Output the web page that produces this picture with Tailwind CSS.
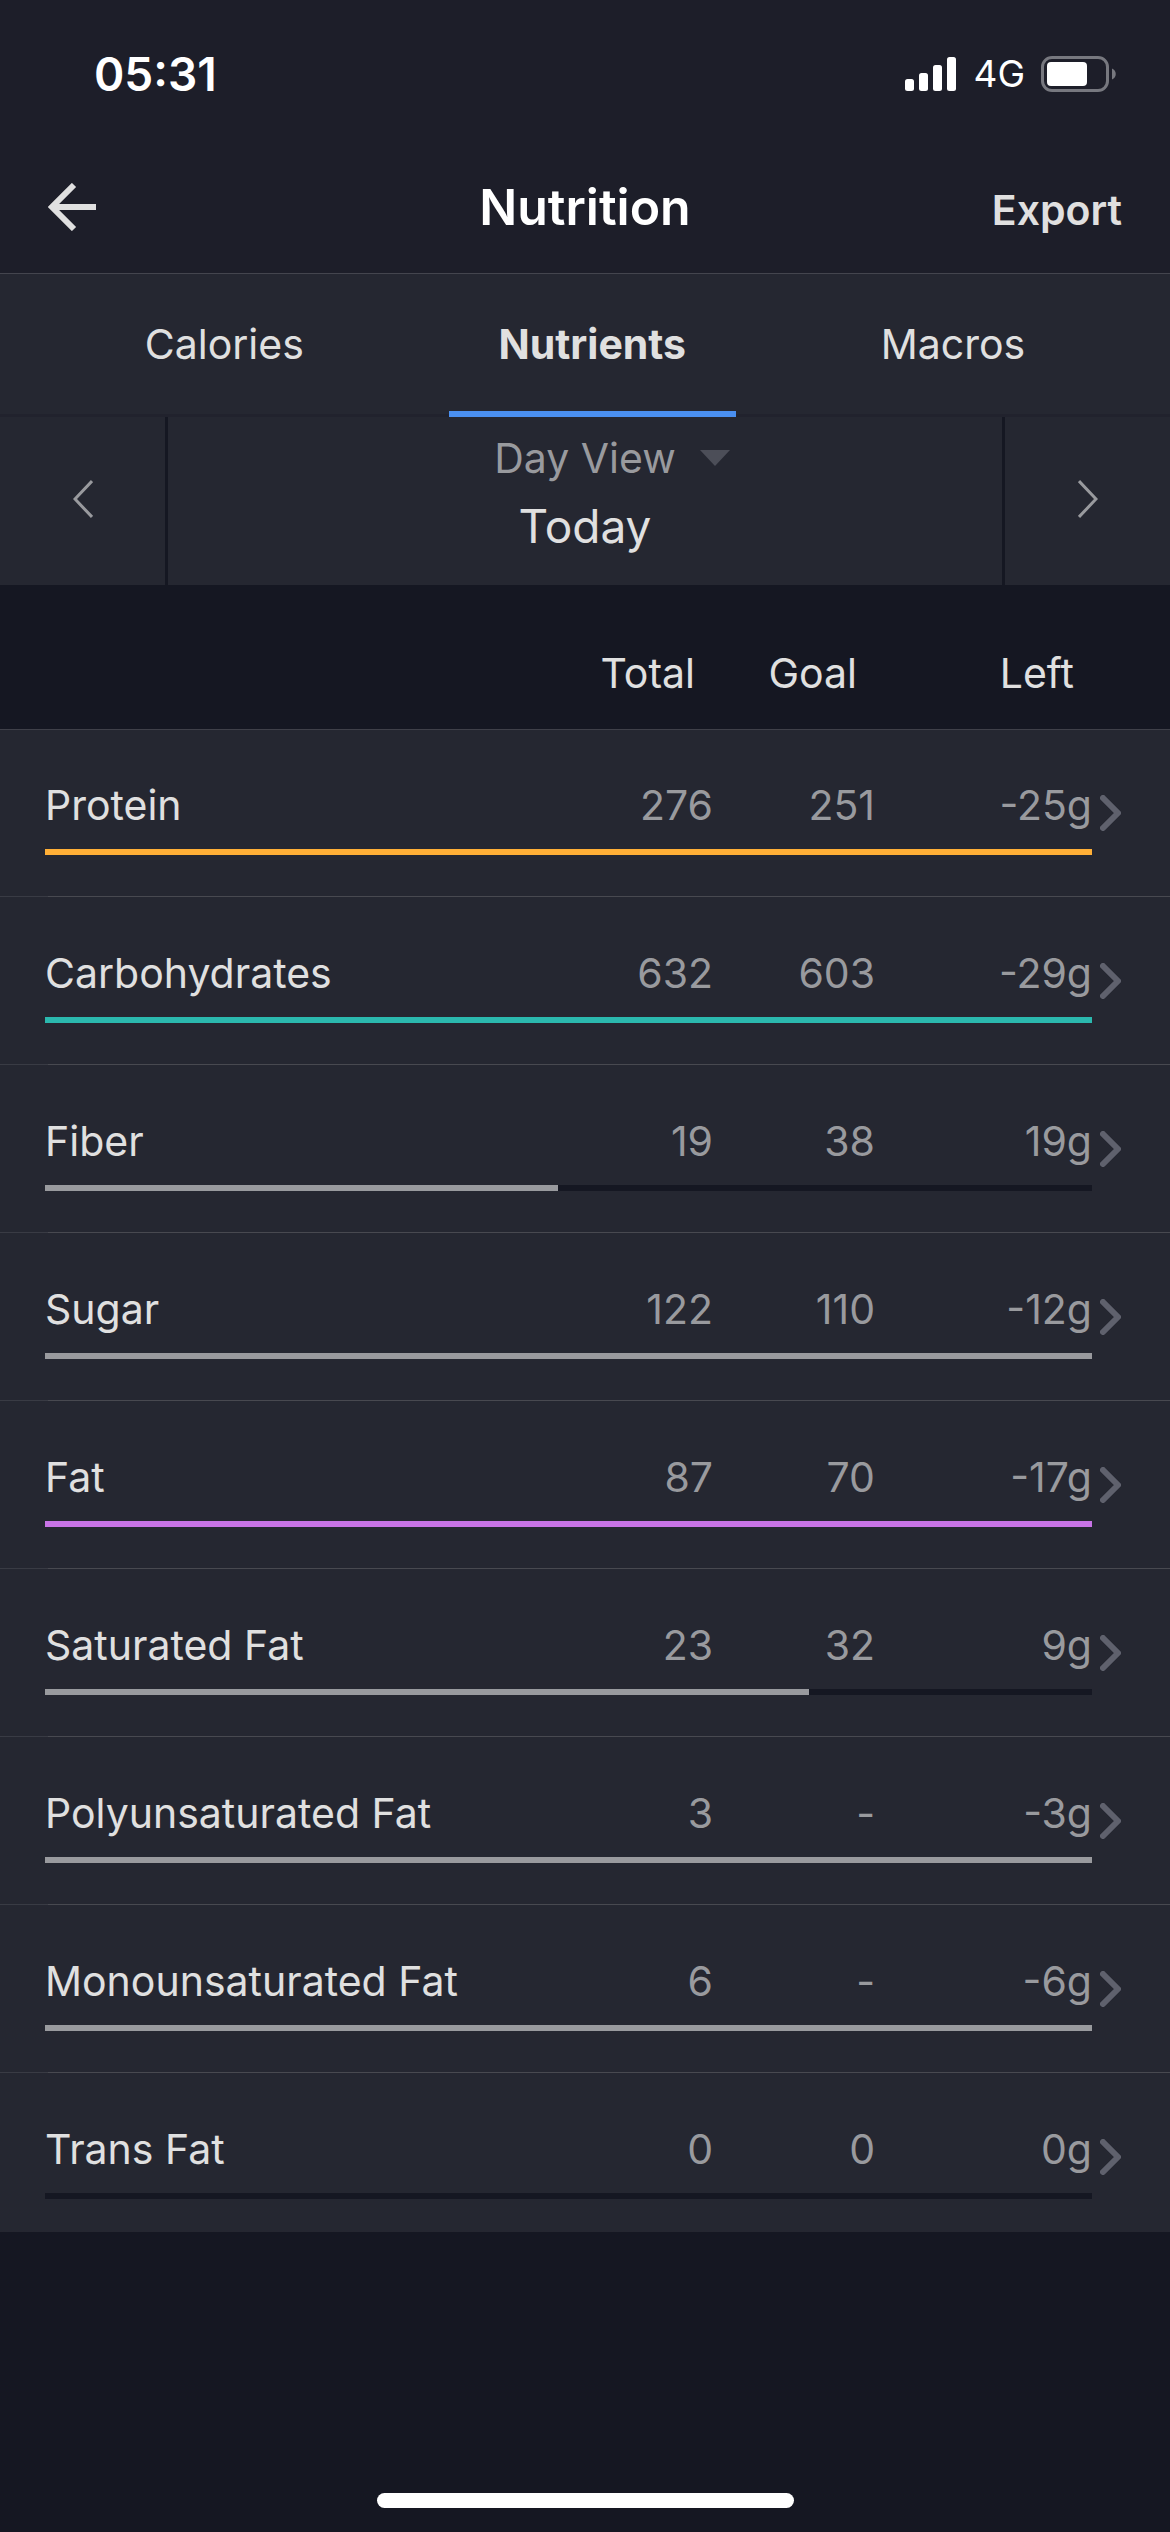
<!DOCTYPE html>
<html lang="en">
  <head>
    <meta charset="UTF-8" />
    <meta name="viewport" content="width=device-width, initial-scale=1.0" />
    <title>Nutrition</title>
    <script src="https://cdn.jsdelivr.net/npm/@tailwindcss/browser@4"></script>
  </head>
  <body
    class="flex min-h-screen flex-col bg-[#151722] font-['Inter',sans-serif] text-[41px] leading-[48px] text-[#e0e0e0]"
  >
    <header class="border-b border-[#44454e] bg-[#1d1e29]">
      <!-- Status bar -->
      <div
        class="flex items-center justify-between pt-[46px] pr-[53px] pl-[94px] text-white"
      >
        <time class="text-[46px] leading-[56px] font-semibold">05:31</time>
        <div class="flex items-center">
          <svg class="h-9 w-[52px]" viewBox="0 0 52 36" fill="currentColor">
            <rect x="0" y="23" width="9" height="12" rx="2.5" />
            <rect x="14" y="17" width="9" height="18" rx="2.5" />
            <rect x="28" y="9" width="9" height="26" rx="2.5" />
            <rect x="42" y="1" width="9" height="34" rx="2.5" />
          </svg>
          <span class="px-4 text-[37px]">4G</span>
          <svg class="h-9 w-[76px]" viewBox="0 0 76 36">
            <rect x="1.5" y="1.5" width="65" height="33" rx="9.5" fill="none" stroke="#77787f" stroke-width="3" />
            <rect x="6" y="6" width="40" height="24" rx="4" fill="white" />
            <path d="M71 12.5c5 2 5 9 0 11z" fill="#77787f" />
          </svg>
        </div>
      </div>

      <!-- Title bar -->
      <div
        class="grid grid-cols-[1fr_auto_1fr] items-baseline px-12 pt-[73px] pb-[34px]"
      >
        <a href="#" aria-label="Back" class="self-center">
          <svg class="h-12 w-12" viewBox="0 0 48 48" fill="none" stroke="#e0e0e0" stroke-width="6">
            <path d="M48 24H4M26 2L4 24l22 22" />
          </svg>
        </a>
        <h1 class="text-[50px] leading-[64px] font-semibold text-white">
          Nutrition
        </h1>
        <button type="button" class="justify-self-end font-semibold">
          Export
        </button>
      </div>
    </header>

    <!-- Tabs -->
    <nav
      class="flex justify-evenly border-b-3 border-[#21222d] bg-[#252731]"
    >
      <a href="#" class="px-[50px] pt-[46px] pb-[46px]">Calories</a>
      <a
        href="#"
        aria-current="page"
        class="-mb-[3px] border-b-6 border-[#4a8ff0] px-[50px] pt-[46px] font-bold"
        >Nutrients</a
      >
      <a href="#" class="px-[50px] pt-[46px] pb-[46px]">Macros</a>
    </nav>

    <!-- Date picker -->
    <section class="flex h-[168px] bg-[#252731]">
      <button
        type="button"
        aria-label="Previous day"
        class="flex w-[168px] items-center justify-center border-r-3 border-[#151722] pb-1"
      >
        <svg class="h-10 w-5" viewBox="0 0 20 40" fill="none" stroke="#999a9e" stroke-width="3">
          <path d="M19 2L2 20l17 18" />
        </svg>
      </button>
      <div class="flex-1 pt-[17px] text-center">
        <div class="grid grid-cols-[1fr_auto_1fr] items-center">
          <select
            aria-label="View"
            class="col-start-2 field-sizing-content appearance-none bg-transparent text-[#999a9e]"
          >
            <option>Day View</option>
          </select>
          <svg class="ml-6 h-4 w-[30px]" viewBox="0 0 30 16" fill="#4c4e58">
            <path d="M0 0h30L15 16z" />
          </svg>
        </div>
        <p class="pt-4 text-[46px] leading-[56px]">Today</p>
      </div>
      <button
        type="button"
        aria-label="Next day"
        class="flex w-[168px] items-center justify-center border-l-3 border-[#151722] pb-1"
      >
        <svg class="h-10 w-5" viewBox="0 0 20 40" fill="none" stroke="#999a9e" stroke-width="3">
          <path d="M1 2l17 18L1 38" />
        </svg>
      </button>
    </section>

    <!-- Nutrients -->
    <table class="block">
      <thead class="block">
        <tr
          class="grid grid-cols-[1fr_160px_162px_217px_29px] border-b border-[#3f4049] pt-16 pr-[49px] pb-8 pl-[45px] text-right"
        >
          <td></td>
          <th scope="col" class="pr-[18px] font-normal">Total</th>
          <th scope="col" class="pr-[18px] font-normal">Goal</th>
          <th scope="col" class="pr-[18px] font-normal">Left</th>
          <td></td>
        </tr>
      </thead>
      <tbody id="nutrients" class="block bg-[#252731]"></tbody>
    </table>

    <!-- Home indicator -->
    <div class="mx-auto mt-auto mb-6 h-[15px] w-[417px] rounded-full bg-white"></div>

    <script>
      const nutrients = [
        { name: "Protein", total: 276, goal: 251, left: -25, color: "bg-[#ffaf37]" },
        { name: "Carbohydrates", total: 632, goal: 603, left: -29, color: "bg-[#2bb8ae]" },
        { name: "Fiber", total: 19, goal: 38, left: 19, color: "bg-[#999a9e]", percent: 49 },
        { name: "Sugar", total: 122, goal: 110, left: -12, color: "bg-[#999a9e]" },
        { name: "Fat", total: 87, goal: 70, left: -17, color: "bg-[#c873e6]" },
        { name: "Saturated Fat", total: 23, goal: 32, left: 9, color: "bg-[#999a9e]", percent: 73 },
        { name: "Polyunsaturated Fat", total: 3, goal: "-", left: -3, color: "bg-[#999a9e]" },
        { name: "Monounsaturated Fat", total: 6, goal: "-", left: -6, color: "bg-[#999a9e]" },
        { name: "Trans Fat", total: 0, goal: 0, left: 0, color: "bg-[#999a9e]", percent: 0 },
      ];

      document.getElementById("nutrients").innerHTML = nutrients
        .map(
          (item) => `
            <tr class="grid grid-cols-[1fr_160px_162px_217px_29px] bg-[linear-gradient(90deg,#393b44_48px,#484950_48px)] bg-[length:100%_1px] bg-bottom bg-no-repeat pt-[52px] pr-[49px] pb-[42px] pl-[45px] text-right text-[#999a9e] first:pt-[51px] last:bg-none last:pb-[33px]">
              <th scope="row" class="text-left font-normal whitespace-nowrap text-[#e0e0e0]">${item.name}</th>
              <td>${item.total}</td>
              <td>${item.goal}</td>
              <td>${item.left}g</td>
              <td class="row-span-2 pt-[14px] pl-2">
                <a href="#" aria-label="${item.name} details">
                  <svg class="h-9 w-[21px]" viewBox="0 0 21 36" fill="none" stroke="#5f616d" stroke-width="6" stroke-linecap="round" stroke-linejoin="round">
                    <path d="M3 3l15 15L3 33" />
                  </svg>
                </a>
              </td>
              <td class="col-span-4 pt-5">
                <div class="h-[6px] bg-[#151722]">
                  <div class="h-full ${item.color}" style="width: ${item.percent ?? 100}%"></div>
                </div>
              </td>
            </tr>`
        )
        .join("");
    </script>
  </body>
</html>
